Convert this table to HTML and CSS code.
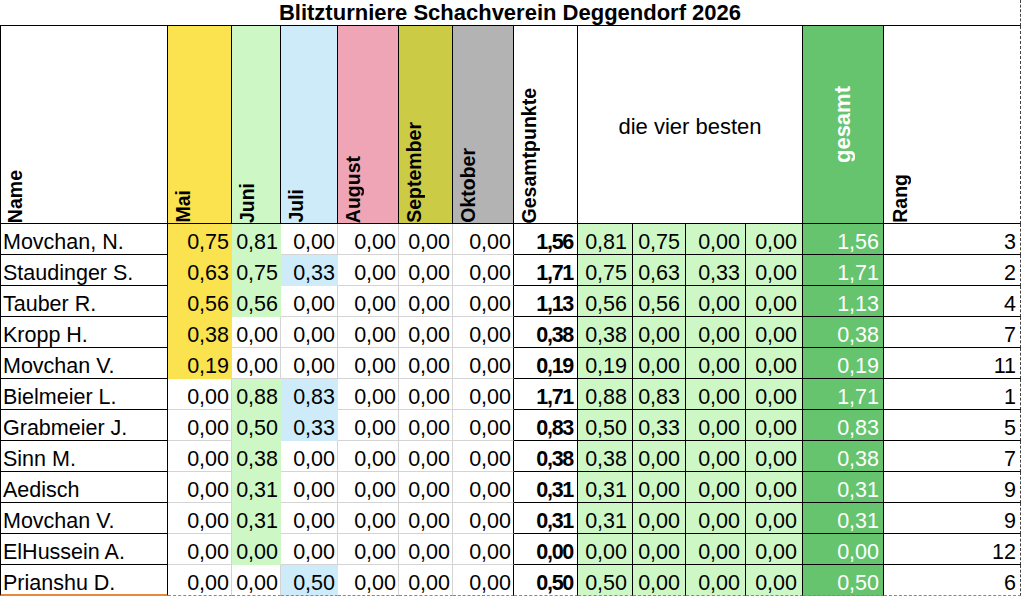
FILE: index.html
```html
<!DOCTYPE html>
<html lang="de">
<head>
<meta charset="utf-8">
<title>Blitzturniere Schachverein Deggendorf 2026</title>
<link rel="stylesheet" href="styles.css">
</head>
<body>
<div class="sheet">
  <div class="title">Blitzturniere Schachverein Deggendorf 2026</div>

  <div class="h h-name"><span class="rot">Name</span></div>
  <div class="h bg-y"><span class="rot">Mai</span></div>
  <div class="h bg-g"><span class="rot">Juni</span></div>
  <div class="h bg-b"><span class="rot">Juli</span></div>
  <div class="h bg-p"><span class="rot">August</span></div>
  <div class="h bg-o"><span class="rot">September</span></div>
  <div class="h bg-k"><span class="rot">Oktober</span></div>
  <div class="h"><span class="rot">Gesamtpunkte</span></div>
  <div class="h best-h">die vier besten</div>
  <div class="h ges-h"><span class="rot">gesamt</span></div>
  <div class="h rang-h"><span class="rot">Rang</span></div>

  <div class="row">
    <div class="n">Movchan, N.</div>
    <div class="y">0,75</div><div class="g">0,81</div><div>0,00</div><div>0,00</div><div>0,00</div><div class="okt">0,00</div>
    <div class="gp">1,56</div>
    <div class="bst">0,81</div><div class="bst">0,75</div><div class="bst">0,00</div><div class="bst">0,00</div>
    <div class="ges">1,56</div><div class="rk">3</div>
  </div>
  <div class="row">
    <div class="n">Staudinger S.</div>
    <div class="y">0,63</div><div class="g">0,75</div><div class="b">0,33</div><div>0,00</div><div>0,00</div><div class="okt">0,00</div>
    <div class="gp">1,71</div>
    <div class="bst">0,75</div><div class="bst">0,63</div><div class="bst">0,33</div><div class="bst">0,00</div>
    <div class="ges">1,71</div><div class="rk">2</div>
  </div>
  <div class="row">
    <div class="n">Tauber R.</div>
    <div class="y">0,56</div><div class="g">0,56</div><div>0,00</div><div>0,00</div><div>0,00</div><div class="okt">0,00</div>
    <div class="gp">1,13</div>
    <div class="bst">0,56</div><div class="bst">0,56</div><div class="bst">0,00</div><div class="bst">0,00</div>
    <div class="ges">1,13</div><div class="rk">4</div>
  </div>
  <div class="row">
    <div class="n">Kropp H.</div>
    <div class="y">0,38</div><div>0,00</div><div>0,00</div><div>0,00</div><div>0,00</div><div class="okt">0,00</div>
    <div class="gp">0,38</div>
    <div class="bst">0,38</div><div class="bst">0,00</div><div class="bst">0,00</div><div class="bst">0,00</div>
    <div class="ges">0,38</div><div class="rk">7</div>
  </div>
  <div class="row">
    <div class="n">Movchan V.</div>
    <div class="y">0,19</div><div>0,00</div><div>0,00</div><div>0,00</div><div>0,00</div><div class="okt">0,00</div>
    <div class="gp">0,19</div>
    <div class="bst">0,19</div><div class="bst">0,00</div><div class="bst">0,00</div><div class="bst">0,00</div>
    <div class="ges">0,19</div><div class="rk">11</div>
  </div>
  <div class="row">
    <div class="n">Bielmeier L.</div>
    <div>0,00</div><div class="g">0,88</div><div class="b">0,83</div><div>0,00</div><div>0,00</div><div class="okt">0,00</div>
    <div class="gp">1,71</div>
    <div class="bst">0,88</div><div class="bst">0,83</div><div class="bst">0,00</div><div class="bst">0,00</div>
    <div class="ges">1,71</div><div class="rk">1</div>
  </div>
  <div class="row">
    <div class="n">Grabmeier J.</div>
    <div>0,00</div><div class="g">0,50</div><div class="b">0,33</div><div>0,00</div><div>0,00</div><div class="okt">0,00</div>
    <div class="gp">0,83</div>
    <div class="bst">0,50</div><div class="bst">0,33</div><div class="bst">0,00</div><div class="bst">0,00</div>
    <div class="ges">0,83</div><div class="rk">5</div>
  </div>
  <div class="row">
    <div class="n">Sinn M.</div>
    <div>0,00</div><div class="g">0,38</div><div>0,00</div><div>0,00</div><div>0,00</div><div class="okt">0,00</div>
    <div class="gp">0,38</div>
    <div class="bst">0,38</div><div class="bst">0,00</div><div class="bst">0,00</div><div class="bst">0,00</div>
    <div class="ges">0,38</div><div class="rk">7</div>
  </div>
  <div class="row">
    <div class="n">Aedisch</div>
    <div>0,00</div><div class="g">0,31</div><div>0,00</div><div>0,00</div><div>0,00</div><div class="okt">0,00</div>
    <div class="gp">0,31</div>
    <div class="bst">0,31</div><div class="bst">0,00</div><div class="bst">0,00</div><div class="bst">0,00</div>
    <div class="ges">0,31</div><div class="rk">9</div>
  </div>
  <div class="row">
    <div class="n">Movchan V.</div>
    <div>0,00</div><div class="g">0,31</div><div>0,00</div><div>0,00</div><div>0,00</div><div class="okt">0,00</div>
    <div class="gp">0,31</div>
    <div class="bst">0,31</div><div class="bst">0,00</div><div class="bst">0,00</div><div class="bst">0,00</div>
    <div class="ges">0,31</div><div class="rk">9</div>
  </div>
  <div class="row">
    <div class="n">ElHussein A.</div>
    <div>0,00</div><div class="g">0,00</div><div>0,00</div><div>0,00</div><div>0,00</div><div class="okt">0,00</div>
    <div class="gp">0,00</div>
    <div class="bst">0,00</div><div class="bst">0,00</div><div class="bst">0,00</div><div class="bst">0,00</div>
    <div class="ges">0,00</div><div class="rk">12</div>
  </div>
  <div class="row last">
    <div class="n">Prianshu D.</div>
    <div>0,00</div><div>0,00</div><div class="b">0,50</div><div>0,00</div><div>0,00</div><div class="okt">0,00</div>
    <div class="gp">0,50</div>
    <div class="bst">0,50</div><div class="bst">0,00</div><div class="bst">0,00</div><div class="bst">0,00</div>
    <div class="ges">0,50</div><div class="rk">6</div>
  </div>
</div>
</body>
</html>
```

FILE: styles.css
```css
* {
  box-sizing: border-box;
}

body {
  margin: 0;
  background: #ffffff;
  color: #000000;
  font-family: "Liberation Sans", Arial, sans-serif;
}

.sheet {
  display: grid;
  grid-template-columns: 168px 64px 49px 57px 61px 54px 61px 64px 55px 53px 60px 57px 81px 137px;
  grid-template-rows: 26px 198px repeat(12, 31px);
  width: 1021px;
}

.row {
  display: contents;
}

.title {
  grid-column: 1 / -1;
  border-bottom: 1px solid #000;
  border-right: 1px dashed #444;
  font-weight: bold;
  font-size: 22px;
  line-height: 24px;
  padding-top: 1px;
  text-align: center;
  white-space: nowrap;
}

/* header row */
.h {
  display: flex;
  align-items: flex-end;
  justify-content: flex-start;
  border-right: 1px solid #000;
  border-bottom: 1px solid #000;
  padding: 0 0 0 4px;
  overflow: hidden;
}

.h-name {
  border-left: 1px solid #000;
  padding-left: 3px;
}

.rot {
  writing-mode: vertical-rl;
  transform: rotate(180deg);
  font-weight: bold;
  font-size: 19.5px;
  line-height: 22px;
  white-space: nowrap;
}

.bg-y { background: #fae34f; }
.bg-g { background: #cdf8c6; }
.bg-b { background: #ceebfa; }
.bg-p { background: #f0a5b6; }
.bg-o { background: #cccb45; }
.bg-k { background: #b3b3b3; }

.best-h {
  grid-column: span 4;
  justify-content: center;
  align-items: center;
  padding: 4px 0 0 0;
  font-size: 22px;
}

.ges-h {
  justify-content: center;
  align-items: center;
  padding: 0;
  background: #66c46f;
  color: #ffffff;
}

.ges-h .rot {
  font-size: 22px;
}

.rang-h {
  border-right: 1px dashed #444;
  padding-left: 5px;
}

/* data rows */
.row > div {
  font-size: 21.5px;
  line-height: 24px;
  padding-top: 6px;
  padding-right: 2px;
  text-align: right;
  white-space: nowrap;
  overflow: hidden;
  border-right: 1px solid #d4d4d4;
  border-bottom: 1px solid #d4d4d4;
}

.row > .n {
  text-align: left;
  padding-left: 2px;
  border-left: 1px solid #000;
  border-right-color: #000;
  border-bottom-color: #000;
}

.row > .y {
  background: #fae34f;
  border-color: #fae34f;
}

.row > .g {
  background: #cdf8c6;
  border-color: #cdf8c6;
}

.row > .b {
  background: #ceebfa;
  border-color: #ceebfa;
}

.row > .okt {
  border-right-color: #000;
}

.row > .gp {
  font-weight: bold;
  letter-spacing: -1.3px;
  padding-right: 4px;
  border-right-color: #000;
  border-bottom-color: #000;
}

.row > .bst {
  background: #cdf8c6;
  padding-right: 5px;
  border-right-color: #000;
  border-bottom-color: #000;
}

.row > .ges {
  background: #66c46f;
  color: #ffffff;
  padding-right: 4px;
  border-right-color: #000;
  border-bottom-color: #000;
}

.row > .rk {
  padding-right: 4px;
  border-right: 1px dashed #444;
  border-bottom-color: #000;
}

.row.last > div {
  border-bottom: 1px dashed #888;
}

.row.last > .n {
  border-bottom: 2px solid #e8893a;
}
```
